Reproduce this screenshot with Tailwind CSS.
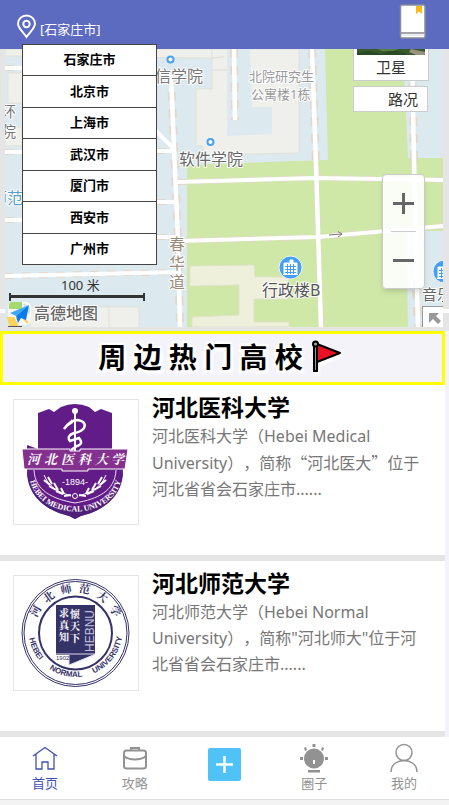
<!DOCTYPE html>
<html lang="zh-CN">
<head>
<meta charset="utf-8">
<meta name="viewport" content="width=device-width, initial-scale=1">
<title>周边热门高校</title>
<script src="https://cdn.jsdelivr.net/npm/@tailwindcss/browser@4"></script>
</head>
<body class="flex min-h-screen flex-col bg-[#f4f3f9] font-['Noto_Sans','Noto_Sans_CJK_SC',sans-serif] text-black">

<header class="relative z-20 flex h-[49px] shrink-0 items-start justify-between bg-[#5c6bc0] pr-[23px] pl-4">
  <button type="button" class="flex items-end gap-1 pt-[14px] text-[13px] leading-5 text-white" aria-expanded="true" aria-controls="cities">
    <svg class="h-[25px] w-5" viewBox="0 0 20 25" fill="none" stroke="#fff" stroke-width="2" aria-hidden="true">
      <path d="M10.500 23C7 18 2 14 2 9.700a8.500 8.200 0 0 1 17 0C19 14 14 18 10.500 23Z"/><circle cx="10.500" cy="10" r="3.200"/>
    </svg>
    <span>[石家庄市]</span>
  </button>
  <button type="button" class="mt-1" aria-label="收藏">
    <svg class="h-[35px] w-[27px]" viewBox="0 0 27 35" aria-hidden="true">
      <rect x="1.500" y="1" width="24.500" height="33" rx="1.500" fill="#fff" stroke="#888b98" stroke-width="1.500"/>
      <path d="M17 2h6v8l-3-2.500L17 10Z" fill="#fdb813"/>
      <path d="M2 29h23.500" stroke="#85858c" stroke-width="1.500"/>
      <path d="M2 31h23.500" stroke="#ddd"/>
    </svg>
  </button>
  <ul id="cities" class="absolute top-[44px] left-[22px] flex h-[221px] w-[135px] flex-col divide-y divide-[#444] border border-[#444] bg-white text-[13px] font-bold">
    <li class="flex flex-1"><button type="button" class="flex-1">石家庄市</button></li>
    <li class="flex flex-1"><button type="button" class="flex-1">北京市</button></li>
    <li class="flex flex-1"><button type="button" class="flex-1">上海市</button></li>
    <li class="flex flex-1"><button type="button" class="flex-1">武汉市</button></li>
    <li class="flex flex-1"><button type="button" class="flex-1">厦门市</button></li>
    <li class="flex flex-1"><button type="button" class="flex-1">西安市</button></li>
    <li class="flex flex-1"><button type="button" class="flex-1">广州市</button></li>
  </ul>
</header>

<section class="relative shrink-0 bg-[#e5e5e5]" aria-label="地图">
  <svg class="block h-[282px] w-full" viewBox="0 49 449 282" preserveAspectRatio="xMidYMid slice">
    <defs><clipPath id="mapclip"><rect x="5" y="49" width="438" height="278"/></clipPath></defs>
    <path d="M0 311H449" stroke="#fff" stroke-width="4"/>
    <g clip-path="url(#mapclip)">
      <rect x="5" y="49" width="438" height="278" fill="#dce9ef"/>
      <g fill="#eff0ec" stroke="#e0e1d8">
        <path d="M5 49H212V58L5 56Z"/>
        <path d="M8 73H30V103H8ZM5 127H22V146H5Z"/>
        <path d="M212 49H299V153L203 155V146H196V89H212Z"/>
        <path d="M30 307H139V330H30ZM109 307V330"/>
      </g>
      <path d="M227 49H250L252 107H272V134L227 136Z" fill="#dce9ef"/>
      <path d="M325 49H403L408 158H443V231H406L408 327H187V165L328 160Z" fill="#cfe7a7"/>
      <path d="M190 266 254 265 255 277H288V299H254V322H289V327H192V317L239 315V285L190 286Z" fill="#eef0dc" stroke="#dfe3c8"/>
      <path d="M212 58 224 57M212 70H227" stroke="#dcdcd3"/>
      <g fill="none">
        <g stroke="#e2d7cb" stroke-width="8" stroke-dasharray="9 8">
          <path d="M171 75 174 147 178 240 180 327M234 49 235 120M312 49 316 165M412 49 414 160M416 290 418 327"/>
        </g>
        <g stroke="#e2d7cb" stroke-width="6" stroke-dasharray="9 8">
          <path d="M316 165 321 327M414 160 416 290M5 68H22M5 152H22M5 220H22M157 151H174M157 202H176M157 237H177M5 276 180 272M178 182 315 178 443 180M179 241 318 237 443 226"/>
        </g>
        <g stroke="#fff" stroke-width="4">
          <path d="M171 75 174 147 178 240 180 327M234 49 235 120M312 49 316 165 321 327M412 49 414 160 418 327" stroke-width="4.500"/>
          <path d="M5 68H22M5 152H22M5 220H22M157 151H174M157 202H176M157 237H177M5 276 180 272M178 182 315 178 443 180M179 241 318 237 443 226M155 130 174 149"/>
        </g>
      </g>
      <path d="M329 235 342 234M338 231.500 342 234 338 237" fill="none" stroke="#777"/>
      <g fill="#fff" stroke="#47a0f0" stroke-width="2"><circle cx="170.500" cy="59.500" r="3"/><circle cx="210.500" cy="142" r="3"/></g>
      <g stroke="#fff" stroke-width="2" paint-order="stroke" stroke-linejoin="round">
        <text x="155" y="82" font-size="16" fill="#777">信学院</text>
        <text x="179" y="165" font-size="16" fill="#666">软件学院</text>
        <g fill="#999" font-size="13"><text x="249" y="81">北院研究生</text><text x="251" y="99">公寓楼1栋</text></g>
        <g fill="#777" font-size="15"><text x="1" y="117">环</text><text x="1" y="137">院</text></g>
        <text x="-9" y="204" font-size="16" fill="#5c9fc6">师范</text>
        <g fill="#9c8b7b" font-size="16"><text x="169" y="250">春</text><text x="169" y="269">华</text><text x="169" y="288">道</text></g>
        <text x="262" y="296" font-size="16" fill="#555">行政楼B</text>
        <text x="422" y="300" font-size="15" fill="#666">音乐</text>
      </g>
      <g id="poi">
        <circle cx="290.500" cy="267.500" r="11.500" fill="#429ff5" stroke="#f2f7f0"/>
        <path d="M284 263H297V274H284ZM290 260H293V263H290ZM283 274.500H298" fill="#fff" stroke="#fff"/>
        <path d="M285 266.500H296M285 269.500H296M285 272.500H296M287.500 264V274M290.500 264V274M293.500 264V274" stroke="#429ff5"/>
      </g>
      <use href="#poi" x="154" y="4"/>
      <g fill="none" stroke="#333"><path d="M10 296.500H144" stroke-width="3"/><path d="M10 293V301M144 293V301" stroke-width="2"/></g>
      <text x="61" y="290" font-size="13" fill="#333">100 米</text>
      <rect x="8" y="302" width="23" height="23" rx="5" fill="#f8f8f4"/>
      <path d="M11 302H22V309H9V304Z" fill="#a5d86e"/><path d="M8 318H14L17 325H10ZM23 318 28 323" fill="#fbd35c" stroke="#fbd35c" stroke-width="2"/><path d="M24 303 30 308V314L23 309Z" fill="#c6e2f9"/>
      <path d="M29 305 10 313 16 316Z" fill="#3da7fa"/><path d="M29 305 16 316 18 323 21 318 26 320Z" fill="#087de8"/>
      <text x="34" y="319" font-size="16" font-weight="500" fill="#666" stroke="#fff" stroke-width="2" paint-order="stroke">高德地图</text>
      <path d="M8 326.500H22" stroke="#555"/>
      <rect x="422.500" y="306.500" width="24" height="24" fill="#fff" stroke="#999"/>
      <path d="M429 313H439L436 316 441 321 438 324 433 319 429 323Z" fill="#999"/>
    </g>
  </svg>
  <div class="absolute top-0 right-5 w-[76px] border-x border-b border-[#ccc] bg-white text-center text-[15px] leading-[25px] text-[#333]">
    <svg class="mx-auto block h-[6px] w-[68px]" viewBox="0 0 68 6" preserveAspectRatio="none" aria-hidden="true"><path d="M0 0H68V6H0Z" fill="#365a2c"/><path d="M0 4 12 2 24 5 35 1 48 4 50 6H0Z" fill="#284a25"/><path d="M54 0 68 3V6H59L52 3Z" fill="#9b927e"/><path d="M20 0H42L36 2H25Z" fill="#55813c"/></svg>
    <button type="button">卫星</button>
  </div>
  <label class="absolute top-[37px] right-[21px] flex h-[26px] w-[75px] items-center justify-end border border-[#ccc] bg-white pr-[9px] text-[15px] text-[#333]">
    <input type="checkbox" class="sr-only">路况
  </label>
  <div class="absolute top-[125px] right-6 flex h-[115px] w-[43px] flex-col rounded border border-[#ccc] bg-white/90 px-2 shadow-md">
    <button type="button" class="flex flex-1 items-center justify-center border-b border-[#ccc]" aria-label="放大"><svg class="size-[21px]" viewBox="0 0 21 21" stroke="#666" stroke-width="3" aria-hidden="true"><path d="M0 10.500H21M10.500 0V21"/></svg></button>
    <button type="button" class="flex flex-1 items-center justify-center" aria-label="缩小"><svg class="size-[21px]" viewBox="0 0 21 21" stroke="#666" stroke-width="3" aria-hidden="true"><path d="M0 10.500H21"/></svg></button>
  </div>
</section>

<main class="mr-1 flex-1 [text-spacing-trim:space-all]">
  <h1 class="flex h-[54px] items-center justify-center gap-2 border-[3px] border-[#ff0] bg-[#f4f3f9] pr-1 pb-[2px] text-[28px] leading-10 font-bold [text-shadow:-3px_3px_2px_#fff,3px_3px_2px_#fff,-2px_-2px_2px_#fff,2px_-2px_2px_#fff]">
    <span>周 边 热 门 高 校</span>
    <svg class="h-[34px] w-8 overflow-visible drop-shadow-[2px_3px_1px_#fff]" viewBox="0 0 32 34" aria-hidden="true">
      <path d="M6 4 29 13 6 22Z" fill="#e81224" stroke="#000" stroke-width="2" stroke-linejoin="round"/>
      <path d="M3 5H6V31H3Z" fill="#999" stroke="#000" stroke-width="2"/><circle cx="4.500" cy="4" r="2.500" fill="#aaa" stroke="#000" stroke-width="2"/>
    </svg>
  </h1>

  <article class="flex h-[176px] gap-[13px] border-b-[6px] border-[#e5e5e5] bg-white pt-[6px] pr-4 pl-[13px]">
    <div class="mt-2 h-[126px] w-[126px] shrink-0 border border-[#e5e5e5]">
      <svg class="h-full w-full" viewBox="14 400 124 124" role="img" aria-label="河北医科大学校徽">
        <defs><path id="med-arc" d="M29 474C33 524 118 524 122 474"/></defs>
        <path d="M38 449V413L49 409 54 412 61 407Q75 401 89 407L95 412 101 409 112 413V449H123V468C123 495 106 507 91 513Q82 515 75 519Q68 515 59 513C44 507 27 495 27 468V445Z" fill="#611c87"/>
        <path d="M27 471C31 480 29 492 52 504Q75 514 98 504C121 492 119 480 123 471C123 495 106 507 91 513Q82 515 75 519Q68 515 59 513C44 507 27 495 27 471Z" fill="#4e2178"/>
        <path d="M34 470C35 491 53 499 75 503C98 499 115 491 116 470" fill="none" stroke="#eadcf0"/>
        <path d="M22 449H70V451H80V449H128L125 469H88V471H62V469H24Z" fill="#83308e" stroke="#fff"/>
        <path d="M75 411V451" stroke="#fff" stroke-width="2"/><circle cx="75" cy="411" r="3" fill="#fff"/>
        <path d="M64 429Q70 420 78 420Q87 422 84 428Q81 432 74 433Q66 436 70 441L79 438Q84 444 77 446L71 450" fill="none" stroke="#fff" stroke-width="2.500"/>
        <path d="M64 429 73 423 72 419Z" fill="#fff"/>
        <g font-family="Noto Serif CJK SC, Noto Sans CJK SC, serif" font-size="13" font-style="italic" font-weight="700" fill="#fff"><text x="27" y="464">河</text><text x="44" y="464">北</text><text x="61" y="464">医</text><text x="78" y="464">科</text><text x="95" y="464">大</text><text x="111" y="464">学</text></g>
        <text x="75" y="485" text-anchor="middle" font-family="Liberation Sans" font-size="9" fill="#fff">-1894-</text>
        <g stroke="#fff" stroke-width="2" fill="none"><path d="M44 475Q49 490 71 496M106 475Q101 490 79 496" stroke-width="1"/><path d="m44 480 6 5M48 477l4 7M49 486l7 4M54 483l4 7M56 491l7 3M61 488l3 6M64 496l7-1M106 480l-6 5M102 477l-4 7M101 486l-7 4M96 483l-4 7M94 491l-7 3M89 488l-3 6M86 496l-7-1"/><circle cx="75" cy="496" r="2.500" stroke-width="1"/></g>
        <text font-family="Liberation Serif" font-size="8" font-weight="700" fill="#fff"><textPath href="#med-arc" startOffset="50%" text-anchor="middle">HEBEI MEDICAL UNIVERSITY</textPath></text>
      </svg>
    </div>
    <div class="min-w-0">
      <h2 class="text-[23px] leading-8 font-bold">河北医科大学</h2>
      <p class="text-[16px] leading-[26px] text-[#777]">河北医科大学（Hebei Medical University），简称<span class="font-['Noto_Sans_CJK_SC',sans-serif]">“河北医大”</span>位于河北省省会石家庄市......</p>
    </div>
  </article>

  <article class="flex h-[176px] gap-[13px] border-b-[6px] border-[#e5e5e5] bg-white pt-[6px] pr-4 pl-[13px]">
    <div class="mt-2 h-[116px] w-[126px] shrink-0 border border-[#e5e5e5]">
      <svg class="h-full w-full" viewBox="14 576 124 114" role="img" aria-label="河北师范大学校徽">
        <defs><path id="nor-bottom" d="M28.500 630A47 47 0 0 0 122.500 630"/></defs>
        <g fill="none" stroke="#353267"><circle cx="75.500" cy="633" r="53.500"/><circle cx="75.500" cy="633" r="51.500" stroke-width="1"/><circle cx="75.500" cy="633" r="36.500" stroke-width="2"/></g>
        <path d="M56 605H95V654L69 665V655H56Z" fill="#353267"/>
        <path d="M56 654H95M69 655V665L94 655" fill="none" stroke="#dedced"/>
        <g fill="#fff" font-family="Noto Serif CJK SC, Noto Sans CJK SC, serif" font-size="10" font-weight="700"><text x="59" y="617">求</text><text x="59" y="629">真</text><text x="59" y="641">知</text><text x="70" y="618">懷</text><text x="70" y="630">天</text><text x="70" y="642">下</text></g>
        <text transform="translate(94 652) rotate(-90)" font-family="Liberation Sans" font-size="12" fill="#c2c0dc">HEBNU</text>
        <text x="56" y="660" font-family="Liberation Sans" font-size="6" fill="#353267">1902</text>
        <g fill="#353267" font-family="Noto Serif CJK SC, Noto Sans CJK SC, serif" font-size="11" font-weight="700" text-anchor="middle">
          <text transform="translate(39 613) rotate(-60)">河</text><text transform="translate(51 600) rotate(-36)">北</text><text transform="translate(67 593) rotate(-12)">师</text><text transform="translate(84 593) rotate(12)">范</text><text transform="translate(100 600) rotate(36)">大</text><text transform="translate(112 613) rotate(60)">学</text>
        </g>
        <g fill="#353267" font-family="Liberation Sans" font-size="8" font-weight="700" text-anchor="middle">
          <text><textPath href="#nor-bottom" startOffset="14%">HEBEI</textPath></text><text><textPath href="#nor-bottom" startOffset="43%">NORMAL</textPath></text><text><textPath href="#nor-bottom" startOffset="79%">UNIVERSITY</textPath></text>
        </g>
      </svg>
    </div>
    <div class="min-w-0">
      <h2 class="text-[23px] leading-8 font-bold">河北师范大学</h2>
      <p class="text-[16px] leading-[26px] text-[#777]">河北师范大学（Hebei Normal University），简称"河北师大"位于河北省省会石家庄市......</p>
    </div>
  </article>
</main>

<footer class="bg-[#f3f3f3] pb-[5px]">
  <nav class="grid h-[63px] grid-cols-5 border-b border-[#ddd] bg-white text-center text-[13px] leading-5 text-[#929292]">
    <a href="#" class="flex flex-col items-center pt-[6px] text-[#3f51b5]">
      <svg class="h-[30px] w-[30px]" viewBox="0 0 30 30" fill="none" stroke="currentColor" stroke-width="1.300" aria-hidden="true"><path d="M3 13 15 4.500 27 13M6 11V26H12V19H18V26H24V11"/></svg>首页</a>
    <a href="#" class="flex flex-col items-center pt-[6px]">
      <svg class="h-[30px] w-[30px]" viewBox="0 0 30 30" fill="none" stroke="currentColor" stroke-width="2" aria-hidden="true"><rect x="4" y="7.500" width="22" height="18" rx="2.500"/><path d="M11 7V5H19V7M4 13Q8 16.500 15 16.500T26 13"/></svg>攻略</a>
    <a href="#" class="flex items-start justify-center pt-[11px]" aria-label="发布">
      <svg class="size-[33px]" viewBox="0 0 33 33" aria-hidden="true"><rect width="33" height="33" rx="2" fill="#4fc3f7"/><path d="M8 16.500H25M16.500 8V25" stroke="#fff" stroke-width="2.500"/></svg></a>
    <a href="#" class="flex flex-col items-center pt-[6px]">
      <svg class="h-[30px] w-[30px]" viewBox="0 0 30 30" fill="currentColor" aria-hidden="true"><circle cx="15" cy="15.500" r="10"/><path d="M10 23H20L18 25H12ZM9 27H21V29.500H9ZM13.500 1H16.500V4H13.500ZM1 14H4V17H1ZM26 14H29V17H26ZM5 5 7 4 8 7 6 8ZM25 5 23 4 22 7 24 8Z"/><path d="M14 17H16V21H14Z" fill="#fff"/></svg>圈子</a>
    <a href="#" class="flex flex-col items-center pt-[6px]">
      <svg class="h-[30px] w-[30px]" viewBox="0 0 30 30" fill="none" stroke="currentColor" stroke-width="1.500" aria-hidden="true"><circle cx="15" cy="9.500" r="8"/><path d="M2 29C2 21 9 17.500 15 17.500S28 21 28 29"/></svg>我的</a>
  </nav>
</footer>
</body>
</html>
